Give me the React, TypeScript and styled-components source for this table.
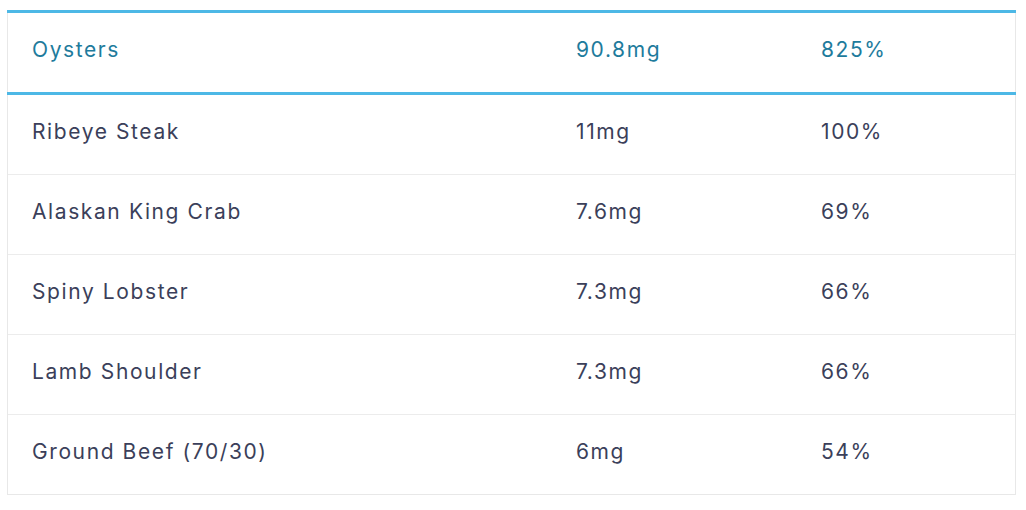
import React from "react";
import styled, { createGlobalStyle } from "styled-components";

const Global = createGlobalStyle`
  html, body { margin: 0; padding: 0; background: #ffffff; }
  body { padding: 10px 10px 0 7px; font-family: "Inter", "Lato", sans-serif; }
`;

const Table = styled.div`
  width: 1009px;
  box-sizing: border-box;
  border-left: 1px solid #e8e8e8;
  border-right: 1px solid #e8e8e8;
  border-bottom: 1px solid #e8e8e8;
`;

const Row = styled.div<{ $head?: boolean }>`
  display: grid;
  grid-template-columns: 544px 245px 1fr;
  align-items: center;
  box-sizing: border-box;
  height: ${(p) => (p.$head ? "85px" : "80px")};
  margin: ${(p) => (p.$head ? "0 -1px" : "0")};
  padding: ${(p) => (p.$head ? "0 1px" : "0")};
  border-top: ${(p) => (p.$head ? "3px solid #4db8e6" : "none")};
  border-bottom: ${(p) => (p.$head ? "3px solid #4db8e6" : "1px solid #ececec")};
  color: ${(p) => (p.$head ? "#1e7b9c" : "#3b3f5a")};
  &:last-child { border-bottom: none; height: 79px; }
`;

const Cell = styled.div`
  padding-left: 24px;
  font-size: 21px;
  letter-spacing: 1.6px;
  white-space: nowrap;
  padding-bottom: 6px;
`;

const rows: [string, string, string][] = [
  ["Ribeye Steak", "11mg", "100%"],
  ["Alaskan King Crab", "7.6mg", "69%"],
  ["Spiny Lobster", "7.3mg", "66%"],
  ["Lamb Shoulder", "7.3mg", "66%"],
  ["Ground Beef (70/30)", "6mg", "54%"],
];

export default function App() {
  return (
    <>
      <Global />
      <Table>
        <Row $head>
          <Cell>Oysters</Cell>
          <Cell>90.8mg</Cell>
          <Cell>825%</Cell>
        </Row>
        {rows.map((r) => (
          <Row key={r[0]}>
            <Cell>{r[0]}</Cell>
            <Cell>{r[1]}</Cell>
            <Cell>{r[2]}</Cell>
          </Row>
        ))}
      </Table>
    </>
  );
}
